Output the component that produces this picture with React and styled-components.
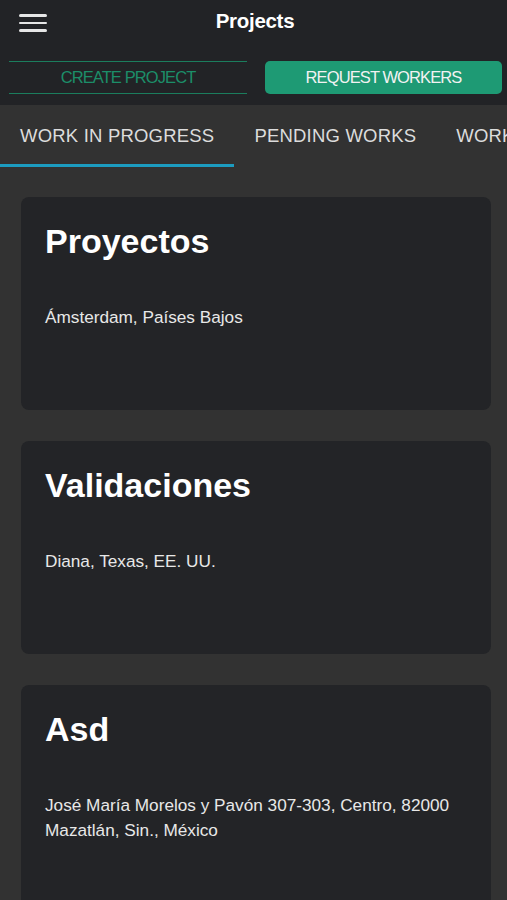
import React from "react";
import styled, { createGlobalStyle } from "styled-components";

const Global = createGlobalStyle`
  html, body {
    margin: 0;
    padding: 0;
    background: #323232;
    font-family: "Liberation Sans", Arial, sans-serif;
  }
`;

const Page = styled.div`
  width: 507px;
  height: 900px;
  overflow: hidden;
  background: #323232;
`;

const Header = styled.header`
  background: #222326;
  height: 105px;
  box-sizing: border-box;
`;

const TitleBar = styled.div`
  position: relative;
  height: 44px;
  display: flex;
  align-items: center;
  justify-content: center;
`;

const MenuButton = styled.div`
  position: absolute;
  left: 19px;
  top: 14px;
  width: 28px;
  display: flex;
  flex-direction: column;
  gap: 5px;
  span {
    display: block;
    height: 2.5px;
    border-radius: 2px;
    background: #e6e6e6;
  }
`;

const Title = styled.h1`
  margin: 0 0 0 3px;
  margin-top: -2px;
  font-size: 20.5px;
  font-weight: 700;
  color: #ffffff;
  letter-spacing: -0.3px;
`;

const ButtonRow = styled.div`
  display: grid;
  grid-template-columns: 238px 237px;
  column-gap: 18px;
  padding: 17px 0 0 9px;
`;

const ActionButton = styled.button`
  height: 33px;
  padding: 0;
  box-sizing: border-box;
  font-family: "Liberation Sans", Arial, sans-serif;
  font-size: 16.5px;
  letter-spacing: -0.9px;
  text-transform: uppercase;
  cursor: pointer;
  border: none;
  ${(p) =>
    p.filled
      ? `
    background: #1e9a74;
    color: #f2f2f2;
    border-radius: 5px;
  `
      : `
    background: transparent;
    color: #1c8e69;
    border-top: 1.5px solid #1b7d5d;
    border-bottom: 1.5px solid #1b7d5d;
  `}
`;

const Tabs = styled.nav`
  display: flex;
  height: 62px;
  background: #323232;
  white-space: nowrap;
  overflow: hidden;
`;

const Tab = styled.div`
  position: relative;
  flex: none;
  padding: 0 20px;
  display: flex;
  align-items: center;
  font-size: 18.5px;
  letter-spacing: 0.2px;
  color: #dcdcdc;
  text-transform: uppercase;
  ${(p) =>
    p.active &&
    `
    &::after {
      content: "";
      position: absolute;
      left: 0;
      right: 0;
      bottom: 0;
      height: 3px;
      background: #1c9cc0;
    }
  `}
`;

const List = styled.div`
  display: flex;
  flex-direction: column;
  gap: 31px;
  padding: 30px 16px 0 21px;
`;

const Card = styled.div`
  background: #232427;
  border-radius: 8px;
  padding: 22px 24px 80px;
`;

const CardTitle = styled.h2`
  margin: 0;
  font-size: 34px;
  line-height: 44px;
  font-weight: 700;
  color: #ffffff;
`;

const CardAddress = styled.p`
  margin: 42px 0 0;
  font-size: 17.2px;
  line-height: 25px;
  color: #e8e8e8;
`;

const projects = [
  { name: "Proyectos", address: "Ámsterdam, Países Bajos" },
  { name: "Validaciones", address: "Diana, Texas, EE. UU." },
  {
    name: "Asd",
    address: "José María Morelos y Pavón 307-303, Centro, 82000 Mazatlán, Sin., México",
  },
];

export default function App() {
  return (
    <Page>
      <Global />
      <Header>
        <TitleBar>
          <MenuButton>
            <span />
            <span />
            <span />
          </MenuButton>
          <Title>Projects</Title>
        </TitleBar>
        <ButtonRow>
          <ActionButton>Create Project</ActionButton>
          <ActionButton filled>Request Workers</ActionButton>
        </ButtonRow>
      </Header>
      <Tabs>
        <Tab active>Work in progress</Tab>
        <Tab>Pending works</Tab>
        <Tab>Works done</Tab>
      </Tabs>
      <List>
        {projects.map((p) => (
          <Card key={p.name}>
            <CardTitle>{p.name}</CardTitle>
            <CardAddress>{p.address}</CardAddress>
          </Card>
        ))}
      </List>
    </Page>
  );
}
